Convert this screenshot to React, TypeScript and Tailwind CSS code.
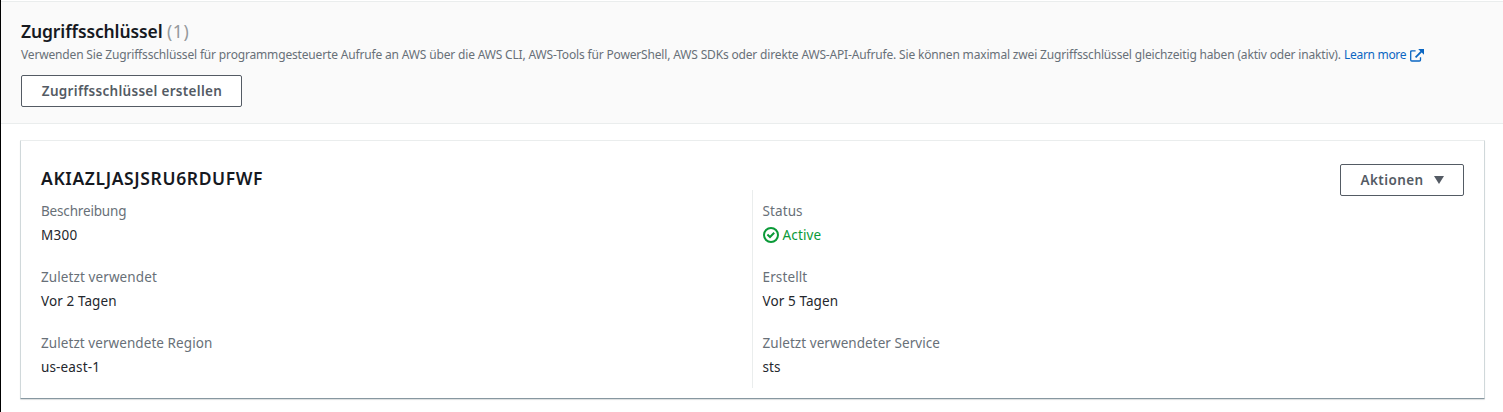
import React from "react";

type Field = { label: string; value: React.ReactNode; labelClass: string; valueClass: string };

function ExternalIcon() {
  return (
    <svg className="ml-1 mt-[5px] h-[14px] w-[14px] shrink-0" viewBox="0 0 14 14" fill="none" stroke="#0a66c2">
      <path d="M5.6 1.8H1.8Q.7 1.8 .7 2.9V10.9Q.7 12 1.8 12H9.4Q10.5 12 10.5 10.9V8.2" strokeWidth="1.3" />
      <path d="M5.6 8.3 11.5 2.4" strokeWidth="1.8" />
      <path d="M8.2 0H14V5.8Z" fill="#0a66c2" stroke="none" />
    </svg>
  );
}

function StatusIcon() {
  return (
    <svg className="mr-[4px] h-4 w-4 shrink-0" viewBox="0 0 16 16" fill="none" stroke="#0a9a38" strokeWidth="2">
      <circle cx="8" cy="8" r="7" />
      <path d="M4.4 7.6 7 10 11.2 5.8" />
    </svg>
  );
}

function FieldBlock({ label, value, labelClass, valueClass }: Field) {
  return (
    <div className="h-[66px]">
      <div className={"h-6 leading-6 text-[#687078] " + labelClass}>{label}</div>
      <div className={"flex h-6 items-center leading-6 text-[#24272d] " + valueClass}>{value}</div>
    </div>
  );
}

const left: Field[] = [
  { label: "Beschreibung", value: "M300", labelClass: "tracking-[-0.17px]", valueClass: "tracking-[0.25px]" },
  { label: "Zuletzt verwendet", value: "Vor 2 Tagen", labelClass: "tracking-[0.1px]", valueClass: "tracking-[0.1px]" },
  { label: "Zuletzt verwendete Region", value: "us-east-1", labelClass: "tracking-[0.07px]", valueClass: "tracking-[0.15px]" },
];

const right: Field[] = [
  {
    label: "Status",
    value: (
      <>
        <StatusIcon />
        <span className="text-[#0a9a38]">Active</span>
      </>
    ),
    labelClass: "tracking-[0.1px]",
    valueClass: "tracking-[0.15px]",
  },
  { label: "Erstellt", value: "Vor 5 Tagen", labelClass: "tracking-[0.12px]", valueClass: "tracking-[0.1px]" },
  { label: "Zuletzt verwendeter Service", value: "sts", labelClass: "tracking-[0.06px]", valueClass: "tracking-[0.05px]" },
];

export default function App() {
  return (
    <div className="h-[412px] w-full overflow-hidden whitespace-nowrap border-l border-black bg-white pt-px font-['Noto_Sans',sans-serif] text-[13.5px]">
      <header className="h-[123px] border-y border-[#eaeded] bg-[#fafafa] pl-5 pt-[18px]">
        <h2 className="flex h-6 text-[17.5px] font-semibold leading-[22px] text-[#16191f]">
          <span className="w-[146px] tracking-[-0.12px]">Zugriffsschlüssel</span>
          <span className="font-normal tracking-[0.6px] text-[#95999c]">(1)</span>
        </h2>
        <div className="flex h-[22px] text-[12px] leading-[22px] text-[#687078]">
          <span className="w-[1323px] tracking-[-0.165px]">
            Verwenden Sie Zugriffsschlüssel für programmgesteuerte Aufrufe an AWS über die AWS CLI, AWS-Tools für PowerShell, AWS SDKs oder direkte AWS-API-Aufrufe. Sie können maximal zwei Zugriffsschlüssel gleichzeitig haben (aktiv oder inaktiv).
          </span>
          <a className="w-[62px] tracking-[-0.3px] text-[#0a66c2]">Learn more</a>
          <ExternalIcon />
        </div>
        <button className="mt-[9px] flex h-8 w-[221px] items-center justify-center rounded-[2px] border border-[#545b64] bg-white pl-px pt-px text-[13.5px] font-semibold tracking-[0.3px] text-[#545b64]">
          <span>Zugriffsschlüssel erstellen</span>
        </button>
      </header>
      <section className="ml-[19px] mr-[18px] mt-4 h-[259px] rounded-[1px] border border-b-[#8797a0] border-l-[#d0d8da] border-r-[#d0d8da] border-t-[#eaeded] px-5 shadow-[0_1px_1px_0_rgba(0,28,36,0.15)]">
        <div className="flex h-[49px] justify-between">
          <h3 className="mt-[25px] h-6 text-[17.5px] font-semibold leading-6 tracking-[0.62px] text-[#16191f]">AKIAZLJASJSRU6RDUFWF</h3>
          <button className="mt-[23px] flex h-8 w-[124px] shrink-0 items-center rounded-[2px] border border-[#545b64] bg-white pl-[19.5px] text-[13.5px] font-semibold text-[#545b64]">
            <span className="w-[63px] pt-px text-left tracking-[0.4px]">Aktionen</span>
            <svg className="ml-[10.5px] h-2 w-[10px]" viewBox="0 0 10 8" fill="#545b64">
              <path d="M0 0H10L5 8Z" />
            </svg>
          </button>
        </div>
        <div className="flex h-[198px]">
          <div className="w-[711px] pt-[9px]">
            {left.map((f) => <FieldBlock key={f.label} {...f} />)}
          </div>
          <div className="border-l border-[#eaeded] pl-[9.5px] pt-[9px]">
            {right.map((f) => <FieldBlock key={f.label} {...f} />)}
          </div>
        </div>
      </section>
    </div>
  );
}
